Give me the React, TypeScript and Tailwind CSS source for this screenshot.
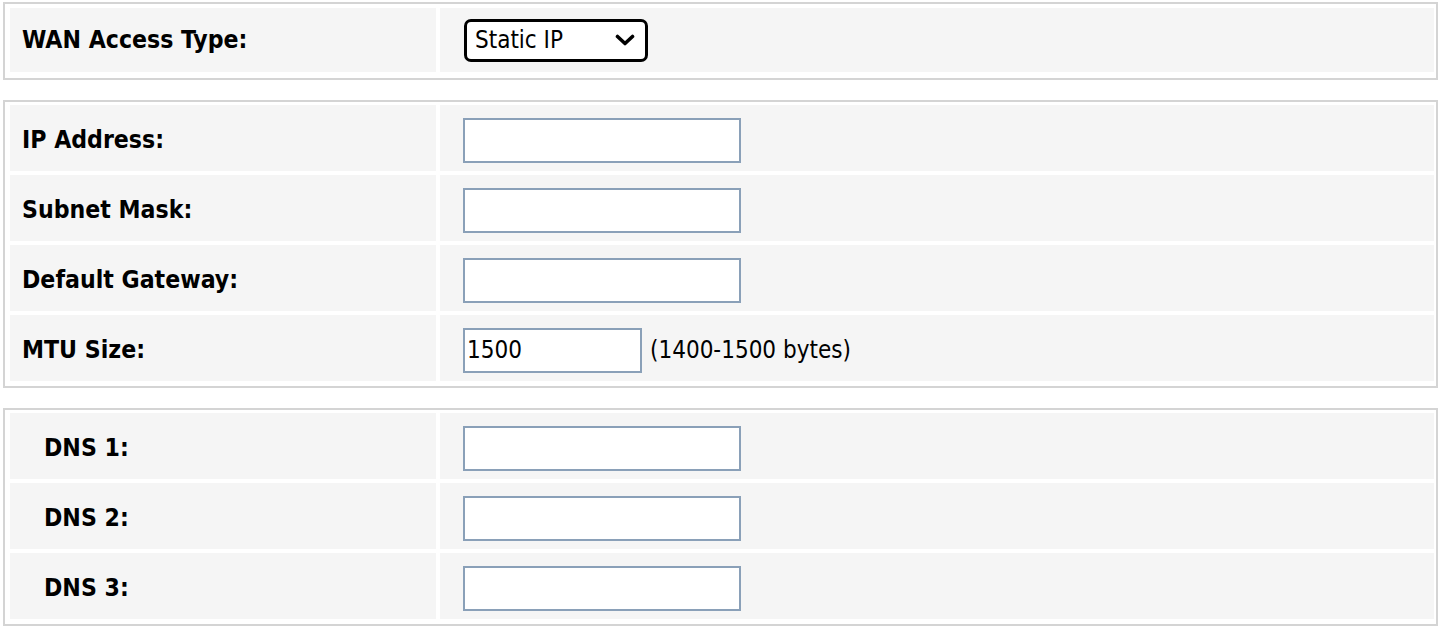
import React from "react";

const font = { fontFamily: '"DejaVu Sans Condensed", "DejaVu Sans", Tahoma, sans-serif' };

function Label({ text, indent }: { text: string; indent?: boolean }) {
  return (
    <div
      className={`w-[426px] shrink-0 bg-[#f5f5f5] flex items-center pt-[4px] font-bold text-[24.6px] text-black ${indent ? "pl-[34px]" : "pl-[12px]"}`}
    >
      {text}
    </div>
  );
}

function TextInput({ value, w = "w-[278px]" }: { value?: string; w?: string }) {
  return (
    <div
      className={`${w} h-[45px] bg-white border-2 border-[#8aa0b8] flex items-center pl-[2px] text-[24px] text-black`}
    >
      {value}
    </div>
  );
}

function Row({
  label,
  indent,
  children,
}: {
  label: string;
  indent?: boolean;
  children: React.ReactNode;
}) {
  return (
    <div className="flex gap-[4px] h-[66px]">
      <Label text={label} indent={indent} />
      <div className="flex-1 bg-[#f5f5f5] flex items-center pt-[4px] pl-[23px] gap-[8px]">{children}</div>
    </div>
  );
}

function Table({ children, first }: { children: React.ReactNode; first?: boolean }) {
  return (
    <div
      className={`w-[1435px] border-2 border-[#d4d4d4] pl-[5px] pr-[2px] flex flex-col gap-[4px] ${first ? "pt-[4px] pb-[6px]" : "pt-[3px] pb-[5px]"}`}
    >
      {children}
    </div>
  );
}

export default function App() {
  return (
    <div className="w-[1446px] h-[633px] bg-white pl-[3px] pt-[2px] flex flex-col gap-[20px] overflow-hidden" style={font}>
      <Table first>
        <div className="flex gap-[4px] h-[64px]">
          <div className="w-[426px] shrink-0 bg-[#f5f5f5] flex items-center pl-[12px] font-bold text-[24.6px] text-black">
            WAN Access Type:
          </div>
          <div className="flex-1 bg-[#f5f5f5] flex items-center pl-[24px]">
            <div className="w-[184px] h-[43px] border-[3px] border-black rounded-[7px] bg-white flex items-center justify-between pl-[8px] pr-[10px] text-[24px] text-black">
              <span>Static IP</span>
              <svg width="20" height="12" viewBox="0 0 20 12" fill="none">
                <path d="M2.5 2.5 L10 9.5 L17.5 2.5" stroke="black" strokeWidth="3.6" strokeLinecap="round" strokeLinejoin="round" />
              </svg>
            </div>
          </div>
        </div>
      </Table>
      <Table>
        <Row label="IP Address:">
          <TextInput />
        </Row>
        <Row label="Subnet Mask:">
          <TextInput />
        </Row>
        <Row label="Default Gateway:">
          <TextInput />
        </Row>
        <Row label="MTU Size:">
          <TextInput value="1500" w="w-[179px]" />
          <span className="text-[24px] text-black">(1400-1500 bytes)</span>
        </Row>
      </Table>
      <Table>
        <Row label="DNS 1:" indent>
          <TextInput />
        </Row>
        <Row label="DNS 2:" indent>
          <TextInput />
        </Row>
        <Row label="DNS 3:" indent>
          <TextInput />
        </Row>
      </Table>
    </div>
  );
}
